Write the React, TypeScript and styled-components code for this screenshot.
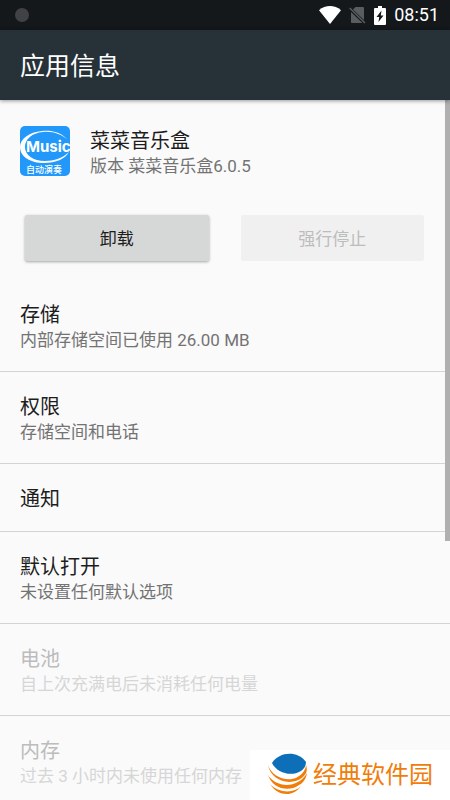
import React from "react";
import styled, { createGlobalStyle } from "styled-components";

const GlobalStyle = createGlobalStyle`
  * { box-sizing: border-box; }
  body {
    margin: 0;
    background: #fafafa;
    font-family: Roboto, "Noto Sans CJK SC", sans-serif;
  }
`;

const Screen = styled.div`
  position: relative;
  display: flex;
  flex-direction: column;
  height: 100vh;
  overflow: hidden;
  background: #fafafa;
`;

const StatusBar = styled.header`
  display: flex;
  flex: none;
  align-items: center;
  justify-content: space-between;
  height: 30px;
  padding: 0 11px 0 15px;
  background: #14181b;
  color: #fff;
`;

const Dot = styled.span`
  width: 14px;
  height: 14px;
  border-radius: 50%;
  background: #414246;
`;

const StatusIcons = styled.div`
  display: flex;
  align-items: center;
  gap: 8px;
  svg { display: block; }
`;

const Clock = styled.time`
  font-size: 18px;
  line-height: 32px;
`;

const TitleBar = styled.div`
  flex: none;
  z-index: 1;
  padding: 19px 20px 15px;
  background: #273238;
  box-shadow: 0 1px 4px rgba(0, 0, 0, 0.4);
`;

const PageTitle = styled.h1`
  margin: 0;
  color: #fff;
  font-size: 25px;
  font-weight: 400;
  line-height: 36px;
`;

const Content = styled.main`
  position: relative;
  flex: 1;
  min-height: 0;
  overflow: hidden;
`;

const AppHeader = styled.section`
  display: flex;
  align-items: flex-start;
  gap: 20px;
  padding: 26px 20px 22px;
  svg { display: block; flex: none; }
`;

const AppTexts = styled.div`
  padding-top: 2px;
`;

const Name = styled.h2<{ $dim?: boolean }>`
  margin: 0;
  color: ${(p) => (p.$dim ? "#bcbcbc" : "#1d1d1d")};
  font-size: 20px;
  font-weight: 400;
  line-height: 26px;
`;

const Detail = styled.p<{ $dim?: boolean }>`
  margin: 0;
  color: ${(p) => (p.$dim ? "#d6d6d6" : "#737373")};
  font-size: 17px;
  line-height: 24px;
`;

const Actions = styled.div`
  display: grid;
  grid-template-columns: 1fr 1fr;
  gap: 32px;
  padding: 15px 26px 19px 25px;
`;

const ActionButton = styled.button`
  height: 46px;
  padding: 0 8px 2px;
  border: 0;
  border-radius: 2px;
  background: #d6d8d7;
  box-shadow: 0 1px 3px rgba(0, 0, 0, 0.35);
  color: #1d1d1d;
  font-family: inherit;
  font-size: 17px;
  &:disabled {
    background: #f0f0f0;
    box-shadow: none;
    color: #bcbcbc;
  }
`;

const List = styled.ul`
  margin: 0;
  padding: 0;
  list-style: none;
`;

const Row = styled.li`
  padding: 22px 20px 19px;
  border-bottom: 1px solid #d4d4d4;
`;

const ScrollThumb = styled.div`
  position: absolute;
  top: 0;
  right: 0;
  width: 5px;
  height: 63%;
  background: #b0b0b0;
`;

const Badge = styled.aside`
  position: absolute;
  right: 0;
  bottom: 0;
  display: flex;
  align-items: center;
  gap: 4px;
  height: 50px;
  padding: 0 17px;
  background: #fff;
  color: #f07d0a;
  font-size: 24px;
  line-height: 48px;
  white-space: nowrap;
`;

const WifiIcon = () => (
  <svg width="22" height="18" viewBox="0 0 22 18" aria-label="Wi-Fi">
    <path d="M0 4.3C6.500-1.300 15.500-1.300 22 4.300L11 18Z" fill="#fff" />
  </svg>
);

const NoSimIcon = () => (
  <svg width="17" height="18" viewBox="0 0 17 18" aria-label="无 SIM 卡">
    <path d="M6.500 1H14Q15 1 15 2V14L4 3.500ZM2 6L13.500 17H3Q2 17 2 16Z" fill="#5a5d5f" />
    <path d="M.700 2L16 17" stroke="#5a5d5f" strokeWidth="1.500" />
  </svg>
);

const BatteryIcon = () => (
  <svg width="12" height="19" viewBox="0 0 12 19" aria-label="正在充电">
    <path d="M4 0H8V2H11Q12 2 12 3V18Q12 19 11 19H1Q0 19 0 18V3Q0 2 1 2H4Z" fill="#fff" />
    <path d="M7.500 4.500L2.500 11H5.200L4.500 16L9.500 9.500H6.800Z" fill="#14181b" />
  </svg>
);

const MusicLogo = () => (
  <svg width="50" height="50" viewBox="0 0 50 50" role="img" aria-label="Music 自动演奏">
    <rect width="50" height="50" rx="5" fill="#2299fa" />
    <path
      d="M48 14C41 6 31 4 22 5C9 6 0 13 0 21C0 31 11 37 24 37C36 37 45 33 49 26C43 32 34 35 25 35C13 35 5 29 5 21C5 13 12 7 23 6C33 5 41 8 48 14Z"
      fill="#fff"
    />
    <text x="6" y="26" fill="#fff" fontFamily="Inter, sans-serif" fontSize="15" fontWeight="700">
      Music
    </text>
    <rect x="5" y="38" width="40" height="10" fill="#2299fa" />
    <text x="6" y="47" fill="#fff" fontFamily="Noto Sans CJK SC, sans-serif" fontSize="9" fontWeight="500">
      自动演奏
    </text>
  </svg>
);

const GlobeLogo = () => (
  <svg width="42" height="44" viewBox="0 0 42 44" aria-hidden="true">
    <path d="M5 10C12-1 30-3 39 9C39 13 37 16 34 18C24 24 10 20 5 10Z" fill="#0d6fb8" />
    <g fill="#f07d0a">
      <path d="M1 12C6 27 28 32 37 18Q39 15 39 12C41 18 39 21 36 24C24 34 4 28 1 12Z" />
      <path d="M1 22C8 34 30 37 40 20C39 26 36 30 32 32C21 40 5 35 1 22Z" />
      <path d="M3 31C11 40 27 41 34 33C27 44 11 44 3 31Z" />
    </g>
  </svg>
);

const items = [
  { name: "存储", detail: "内部存储空间已使用 26.00 MB" },
  { name: "权限", detail: "存储空间和电话" },
  { name: "通知" },
  { name: "默认打开", detail: "未设置任何默认选项" },
  { name: "电池", detail: "自上次充满电后未消耗任何电量", dim: true },
  { name: "内存", detail: "过去 3 小时内未使用任何内存", dim: true },
];

export default function App() {
  return (
    <Screen lang="zh-CN">
      <GlobalStyle />
      <StatusBar>
        <Dot />
        <StatusIcons>
          <WifiIcon />
          <NoSimIcon />
          <BatteryIcon />
          <Clock>08:51</Clock>
        </StatusIcons>
      </StatusBar>
      <TitleBar>
        <PageTitle>应用信息</PageTitle>
      </TitleBar>
      <Content>
        <AppHeader>
          <MusicLogo />
          <AppTexts>
            <Name>菜菜音乐盒</Name>
            <Detail>版本 菜菜音乐盒6.0.5</Detail>
          </AppTexts>
        </AppHeader>
        <Actions>
          <ActionButton type="button">卸载</ActionButton>
          <ActionButton type="button" disabled>
            强行停止
          </ActionButton>
        </Actions>
        <List>
          {items.map((item) => (
            <Row key={item.name}>
              <Name $dim={item.dim}>{item.name}</Name>
              {item.detail && <Detail $dim={item.dim}>{item.detail}</Detail>}
            </Row>
          ))}
        </List>
        <ScrollThumb />
      </Content>
      <Badge>
        <GlobeLogo />
        <span>经典软件园</span>
      </Badge>
    </Screen>
  );
}
